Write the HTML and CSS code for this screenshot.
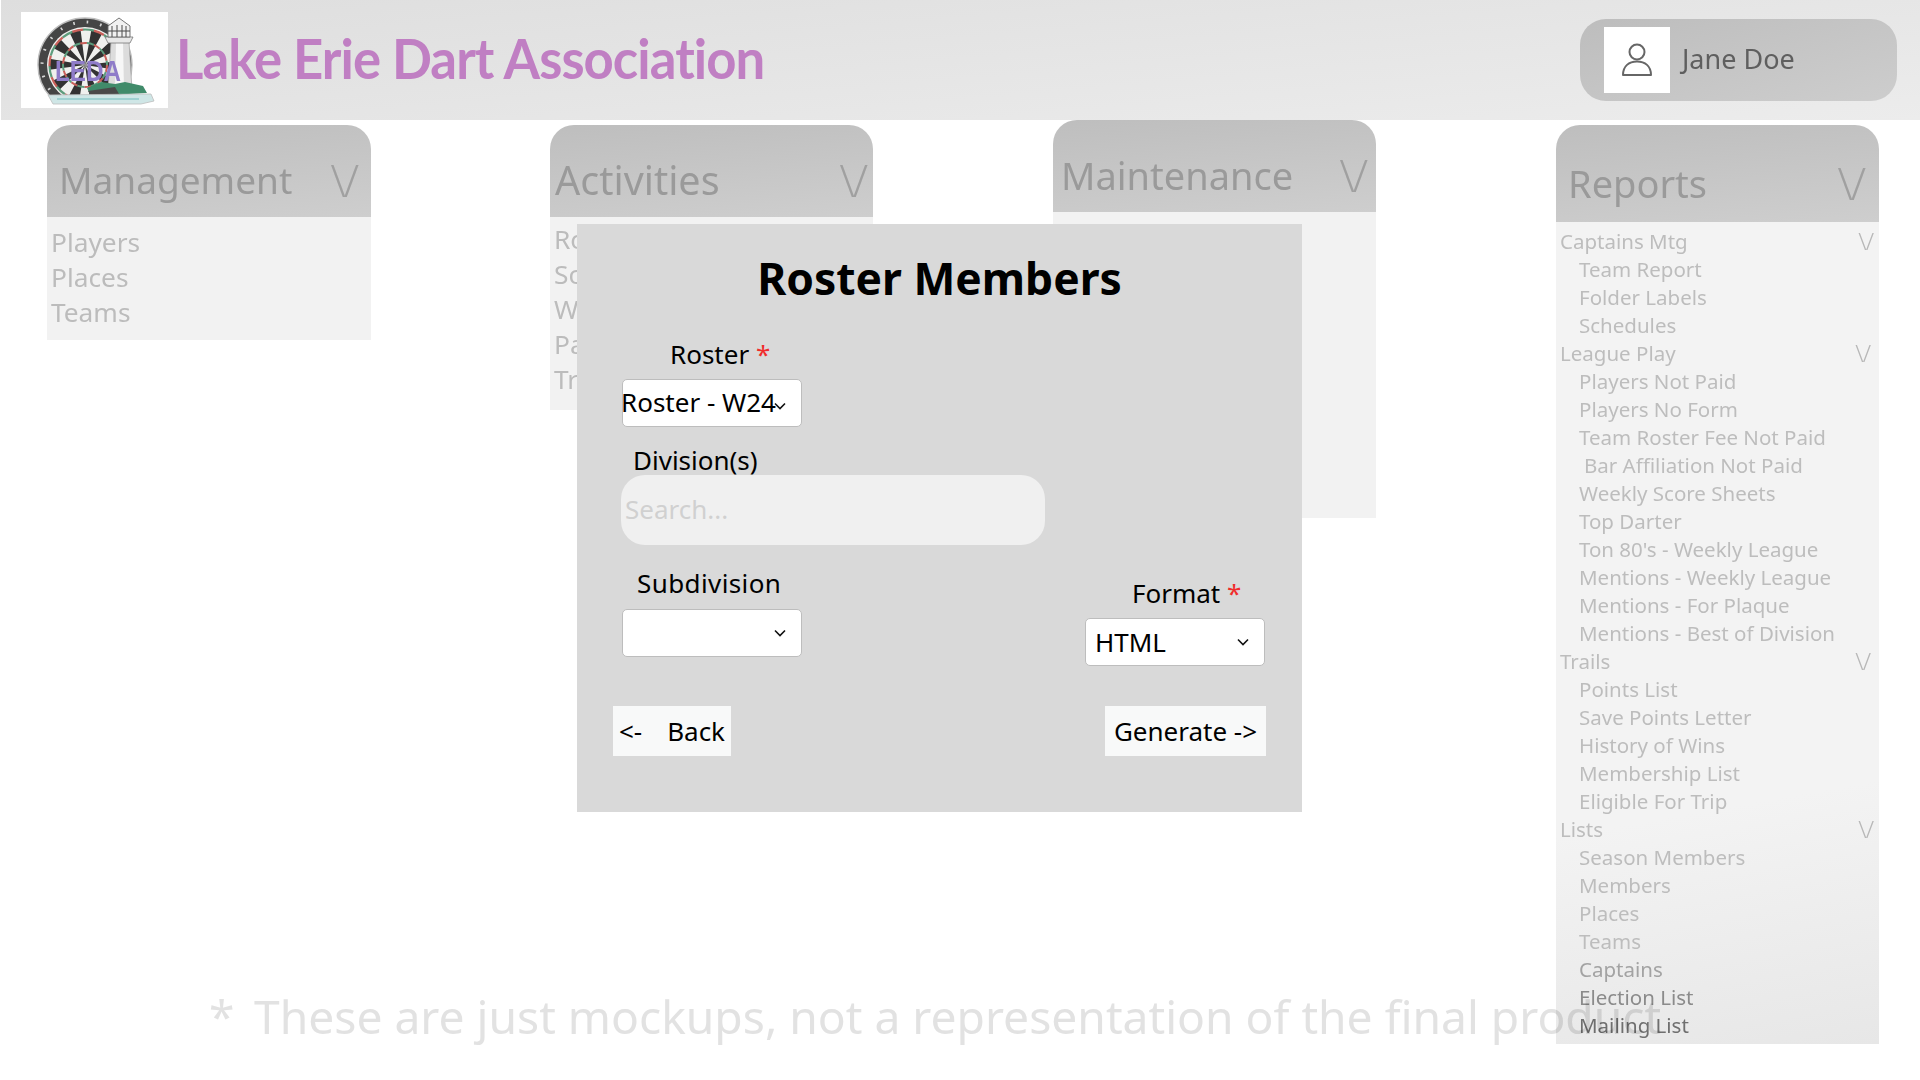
FILE: index.html
```html
<!DOCTYPE html>
<html lang="en">
<head>
<meta charset="utf-8">
<title>Lake Erie Dart Association</title>
<link rel="stylesheet" href="styles.css">
</head>
<body>
<header class="topbar">
  <div class="logo">
    <svg viewBox="0 0 147 96" width="147" height="96">
      <defs>
        <filter id="soft"><feGaussianBlur stdDeviation="0.6"/></filter>
        <clipPath id="board-clip"><rect x="0" y="0" width="147" height="85"/></clipPath>
      </defs>
      <g filter="url(#soft)">
        <g clip-path="url(#board-clip)">
          <circle cx="64" cy="53" r="47" fill="#454545" stroke="#bdbdbd" stroke-width="1.4"/>
          <circle cx="64" cy="53" r="43" fill="none" stroke="#d6d6d6" stroke-width="3" stroke-dasharray="1.6 12"/>
          <circle cx="64" cy="53" r="38" fill="#f0f0ee"/>
          <circle cx="64" cy="53" r="18" fill="none" stroke="#333" stroke-width="36" stroke-dasharray="5.65 5.65" stroke-dashoffset="2.8"/>
          <circle cx="64" cy="53" r="35.5" fill="none" stroke="#c9605a" stroke-width="2.2" stroke-dasharray="11 11"/>
          <circle cx="64" cy="53" r="35.5" fill="none" stroke="#5d9c7c" stroke-width="2.2" stroke-dasharray="11 11" stroke-dashoffset="11"/>
          <circle cx="64" cy="53" r="22" fill="none" stroke="#c9605a" stroke-width="2" stroke-dasharray="7 7"/>
          <circle cx="64" cy="53" r="22" fill="none" stroke="#5d9c7c" stroke-width="2" stroke-dasharray="7 7" stroke-dashoffset="7"/>
        </g>
        <path d="M90 30 L108 30 L111 78 L87 78 Z" fill="#dcdcdc" stroke="#a9a9a9" stroke-width=".8"/>
        <path d="M95 30 L102 30 L103 78 L94 78 Z" fill="#f7f7f7"/>
        <path d="M84 25 L112 25 L109 31 L87 31 Z" fill="#e8e8e8" stroke="#777" stroke-width=".8"/>
        <path d="M87 14 L98 6 L109 14 L109 25 L87 25 Z" fill="#f1f1f1" stroke="#666" stroke-width=".9"/>
        <path d="M91 14 V25 M96 13 V25 M101 13 V25 M105 14 V25 M87 19 H109" stroke="#4a4a4a" stroke-width="1"/>
        <path d="M66 76 L80 70 L94 72 L104 70 L122 74 L126 81 L70 84 Z" fill="#3f8b6b"/>
        <path d="M67 79 L94 75 L98 82 L72 86 Z" fill="#4a4a4a"/>
        <path d="M27 83 L130 82 L133 89 L120 92 L32 92 Z" fill="#cfe6e6" stroke="#bcbcbc" stroke-width=".8"/>
        <path d="M36 87 H118" stroke="#8fcaca" stroke-width="1.4"/>
        <text class="logo-text" x="34" y="69" textLength="66" lengthAdjust="spacingAndGlyphs">LEDA</text>
      </g>
    </svg>
  </div>
  <h1 class="brand">Lake Erie Dart Association</h1>
  <div class="user">
    <div class="avatar">
      <svg viewBox="0 0 32 34" width="32" height="34" fill="none" stroke="#666" stroke-width="2">
        <circle cx="16" cy="9" r="7.5"/>
        <path d="M2 32 C2 23 8 18.5 16 18.5 C24 18.5 30 23 30 32 Z" stroke-linejoin="round"/>
      </svg>
    </div>
    <span class="user-name">Jane Doe</span>
  </div>
</header>

<main class="board">
  <section class="panel panel-mgmt">
    <div class="panel-head"><span class="panel-title">Management</span><span class="chev">\/</span></div>
    <ul class="panel-list">
      <li>Players</li>
      <li>Places</li>
      <li>Teams</li>
    </ul>
  </section>

  <section class="panel panel-act">
    <div class="panel-head"><span class="panel-title">Activities</span><span class="chev">\/</span></div>
    <ul class="panel-list">
      <li>Rosters</li>
      <li>Scores</li>
      <li>Weekly</li>
      <li>Payments</li>
      <li>Trails</li>
    </ul>
  </section>

  <section class="panel panel-maint">
    <div class="panel-head"><span class="panel-title">Maintenance</span><span class="chev">\/</span></div>
    <div class="panel-fill"></div>
  </section>

  <section class="panel panel-rep">
    <div class="panel-head"><span class="panel-title">Reports</span><span class="chev">\/</span></div>
    <div class="rep-list">
      <div class="rep-group g-a"><span>Captains Mtg</span><span class="chev-sm">\/</span></div>
      <div class="rep-item">Team Report</div>
      <div class="rep-item">Folder Labels</div>
      <div class="rep-item">Schedules</div>
      <div class="rep-group g-b"><span>League Play</span><span class="chev-sm">\/</span></div>
      <div class="rep-item">Players Not Paid</div>
      <div class="rep-item">Players No Form</div>
      <div class="rep-item">Team Roster Fee Not Paid</div>
      <div class="rep-item rep-nudge">Bar Affiliation Not Paid</div>
      <div class="rep-item">Weekly Score Sheets</div>
      <div class="rep-item">Top Darter</div>
      <div class="rep-item">Ton 80's - Weekly League</div>
      <div class="rep-item">Mentions - Weekly League</div>
      <div class="rep-item">Mentions - For Plaque</div>
      <div class="rep-item">Mentions - Best of Division</div>
      <div class="rep-group g-b"><span>Trails</span><span class="chev-sm">\/</span></div>
      <div class="rep-item">Points List</div>
      <div class="rep-item">Save Points Letter</div>
      <div class="rep-item">History of Wins</div>
      <div class="rep-item">Membership List</div>
      <div class="rep-item">Eligible For Trip</div>
      <div class="rep-group g-a"><span>Lists</span><span class="chev-sm">\/</span></div>
      <div class="rep-item">Season Members</div>
      <div class="rep-item">Members</div>
      <div class="rep-item">Places</div>
      <div class="rep-item">Teams</div>
      <div class="rep-item tone-1">Captains</div>
      <div class="rep-item tone-2">Election List</div>
      <div class="rep-item tone-3">Mailing List</div>
    </div>
  </section>
</main>

<p class="disclaimer"><span class="star">*</span>These are just mockups, not a representation of the final product</p>

<div class="modal">
  <h2 class="modal-title">Roster Members</h2>

  <label class="lbl lbl-roster">Roster <em>*</em></label>
  <div class="select select-tight">
    <span>Roster - W24</span>
    <svg class="caret caret-tight" viewBox="0 0 12 8" width="12" height="8"><path d="M1 1.5 L6 6.5 L11 1.5"/></svg>
  </div>

  <label class="lbl lbl-div">Division(s)</label>
  <div class="search">Search...</div>

  <div class="split">
    <div class="field">
      <label class="lbl lbl-sub">Subdivision</label>
      <div class="select">
        <span></span>
        <svg class="caret" viewBox="0 0 12 8" width="12" height="8"><path d="M1 1.5 L6 6.5 L11 1.5"/></svg>
      </div>
    </div>
    <div class="field field-format">
      <label class="lbl lbl-format">Format <em>*</em></label>
      <div class="select select-pad">
        <span>HTML</span>
        <svg class="caret" viewBox="0 0 12 8" width="12" height="8"><path d="M1 1.5 L6 6.5 L11 1.5"/></svg>
      </div>
    </div>
  </div>

  <div class="actions">
    <button class="btn btn-back"><span>&lt;-</span><span>Back</span></button>
    <button class="btn btn-gen">Generate -&gt;</button>
  </div>
</div>
</body>
</html>
```

FILE: styles.css
```css
* { box-sizing: border-box; }
html, body { margin: 0; padding: 0; }
body {
  position: relative;
  width: 1920px;
  height: 1080px;
  overflow: hidden;
  background: #fff;
  font-family: "Noto Sans", "Open Sans", sans-serif;
}

/* top bar */
.topbar {
  display: flex;
  align-items: center;
  height: 120px;
  margin-left: 1px;
  padding: 0 23px 0 20px;
  background: linear-gradient(175deg, #dedede 0%, #ececec 100%);
}
.logo { width: 147px; height: 96px; background: #fff; flex: none; }
.logo svg { display: block; }
.logo-text {
  font-family: "Liberation Sans", sans-serif;
  font-size: 29px;
  font-weight: 700;
  fill: #8f7cc9;
}
.brand {
  margin: 0 0 5px 8px;
  font-family: Lato, sans-serif;
  font-size: 56px;
  font-weight: 700;
  color: #c07fc3;
  white-space: nowrap;
  letter-spacing: -1px;
  transform: scaleX(.94);
  transform-origin: left center;
}
.user {
  margin-left: auto;
  flex: none;
  width: 317px;
  height: 82px;
  display: flex;
  align-items: center;
  padding-left: 24px;
  border-radius: 26px;
  background: linear-gradient(165deg, #bdbdbd, #cdcdcd);
}
.avatar {
  width: 66px; height: 66px;
  background: #fff;
  display: flex; align-items: center; justify-content: center;
}
.user-name { margin: 0 0 3px 12px; font-size: 27px; color: #5f5f5f; }

/* columns */
.board {
  display: flex;
  align-items: flex-start;
  gap: 180px;
  padding-left: 47px;
}
.panel { width: 323px; margin-top: 5px; }
.panel-mgmt { width: 324px; margin-right: -1px; }
.panel-maint { margin-top: 0; }
.panel-head {
  display: flex;
  justify-content: space-between;
  align-items: flex-end;
  height: 92px;
  padding: 0 12px 10px 13px;
  border-radius: 24px 24px 0 0;
  background: linear-gradient(175deg, #bebebe, #cecece);
  color: #9a9a9a;
}
.panel-title { font-size: 38px; line-height: 54px; }
.chev { font-size: 44px; line-height: 54px; font-weight: 300; letter-spacing: -2px; color: #a0a0a0; }
.panel-mgmt .panel-title { font-size: 37px; }
.panel-mgmt .panel-head { padding-left: 12px; padding-right: 14px; }
.panel-act .panel-title { font-size: 39.5px; }
.panel-act .panel-head { padding-left: 5px; padding-right: 7px; }
.panel-maint .panel-head { padding-left: 8px; padding-right: 10px; }
.panel-rep .panel-head { height: 97px; padding: 0 15px 12px 12px; }

.panel-list {
  list-style: none;
  margin: 0;
  padding: 8px 0 8px 4px;
  background: #f2f2f2;
  color: #bcbcbc;
  font-size: 26.3px;
}
.panel-list li { height: 35px; line-height: 35px; white-space: nowrap; }
.panel-act .panel-list { height: 193px; padding-top: 5px; }
.panel-mgmt .panel-list { height: 123px; }
.panel-fill { height: 306px; background: #f2f2f2; }

/* reports */
.rep-list {
  height: 822px;
  padding: 5px 0 0 4px;
  background: linear-gradient(170deg, #f3f3f3 70%, #e7e7e7 100%);
  color: #bdbdbd;
  font-size: 20.5px;
}
.rep-group, .rep-item { height: 28px; line-height: 28px; white-space: nowrap; }
.rep-group { display: flex; justify-content: space-between; }
.g-a { padding-right: 6px; }
.g-b { padding-right: 9px; }
.chev-sm { font-size: 24px; font-weight: 300; letter-spacing: -1px; color: #b7b7b7; }
.rep-item { padding-left: 19px; }
.rep-nudge { padding-left: 24px; }
.tone-1 { color: #a3a3a3; }
.tone-2 { color: #8b8b8b; }
.tone-3 { color: #6f6f6f; }

/* footnote */
.disclaimer {
  position: absolute;
  left: 209px;
  top: 985px;
  margin: 0;
  font-size: 46.2px;
  line-height: 64px;
  color: #e2e2e2;
  white-space: nowrap;
  mix-blend-mode: multiply;
}
.star { display: inline-block; width: 45px; }

/* modal */
.modal {
  position: absolute;
  left: 577px;
  top: 224px;
  width: 725px;
  height: 588px;
  padding: 24px 36px 0 36px;
  background: #d9d9d9;
  color: #000;
}
.modal-title {
  margin: 0 0 29px;
  text-align: center;
  font-size: 44.4px;
  line-height: 60px;
  font-weight: 700;
}
.lbl { display: block; font-size: 26px; line-height: 34px; white-space: nowrap; }
.lbl em { font-style: normal; color: #f02c2c; }
.lbl-roster { margin: 0 0 8px 57px; }
.lbl-div { margin: 16px 0 -2px 20px; }
.lbl-sub { margin: 0 0 0 24px; letter-spacing: .4px; }
.lbl-format { margin: 0 0 0 47px; }

.select {
  width: 180px;
  height: 48px;
  display: flex;
  align-items: center;
  justify-content: space-between;
  padding-right: 15px;
  margin-left: 9px;
  background: #fff;
  border: 1px solid #bdbdbd;
  border-radius: 5px;
  font-size: 26px;
}
.select-tight { padding-left: 0; }
.select-tight span { margin: -2px 0 0 -2px; white-space: nowrap; }
.select-pad { padding-left: 9px; margin-left: 0; }
.caret { flex: none; fill: none; stroke: #111; stroke-width: 1.6; }
.caret-tight { margin-left: -6px; margin-right: 0; margin-top: 6px; }

.search {
  width: 424px;
  height: 70px;
  margin-left: 8px;
  padding-left: 4px;
  line-height: 68px;
  border-radius: 24px;
  background: #f0f0f0;
  color: #d0d0d0;
  font-size: 26px;
}
.split {
  display: flex;
  justify-content: space-between;
  margin-top: 21px;
  padding-right: 1px;
}
.field { display: flex; flex-direction: column; gap: 9px; }
.field-format { padding-top: 10px; gap: 8px; }

.actions {
  display: flex;
  justify-content: space-between;
  margin-top: 40px;
}
.btn {
  height: 50px;
  border: 0;
  padding: 0;
  background: #f8f9f9;
  color: #000;
  font-family: inherit;
  font-size: 26px;
}
.btn-back { width: 118px; display: flex; align-items: center; justify-content: space-between; padding: 0 6px; }
.btn-gen { width: 161px; }
```
